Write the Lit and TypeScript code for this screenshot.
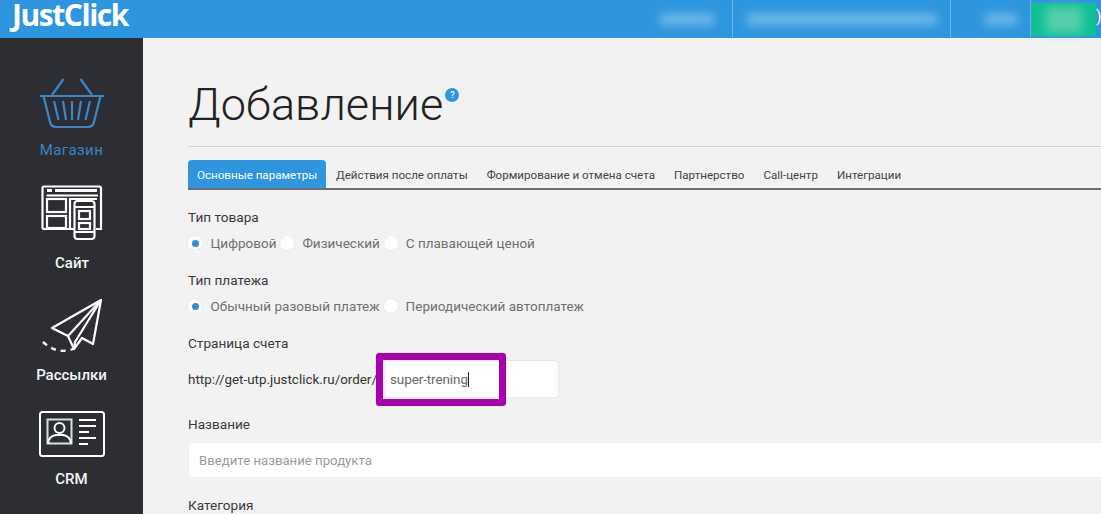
import { LitElement, html, css } from "lit";
import { customElement } from "lit/decorators.js";

const basket = html`<svg class="ic" width="66" height="52" viewBox="0 0 66 52" fill="none" stroke="#3a87c8" stroke-width="2.2">
<path d="M1 18H65" stroke-width="2"/><path d="M4.500 18 11 44Q12 49 17 49H49Q54 49 55 44L61.500 18"/>
<path d="M13 17 24.500 1M53 17 41.500 1"/><path d="M15 23 19.500 42M24 23 27 42M33 23V42M42 23 39 42M51 23 46.500 42"/></svg>`;
const site = html`<svg class="ic" width="62" height="56" viewBox="0 0 62 56" fill="none" stroke="#fff" stroke-width="2.2">
<path d="M34 44H3Q1.500 44 1.500 42V3Q1.500 1.500 3 1.500H58Q60 1.500 60 3V44H55"/><path d="M6 5.500H11M14 5.500H56" stroke-width="3"/>
<path d="M5.500 10.500H57"/><rect x="6" y="14" width="19" height="13"/><rect x="6" y="31" width="19" height="12"/><path d="M29 44V14H56"/>
<rect x="33.500" y="16" width="20" height="38" rx="3" fill="#2d2e33"/><path d="M34 22H53M34 47H53"/><rect x="38" y="26" width="11" height="8"/><rect x="38" y="38" width="11" height="6"/></svg>`;
const plane = html`<svg class="ic" width="62" height="58" viewBox="0 0 62 58" fill="none" stroke="#fff" stroke-width="2.2" stroke-linejoin="round">
<path d="M60 1 11 29 27 37 33 50 41 39 52 45Z"/><path d="M60 1 27 37M60 1 34 43 33 50"/>
<path d="M2 43Q16 56 32 50" stroke-width="2.400" stroke-dasharray="5 5"/></svg>`;
const crm = html`<svg class="ic" width="66" height="46" viewBox="0 0 66 46" fill="none" stroke="#fff" stroke-width="2">
<rect x="1" y="1" width="64" height="44" rx="2.500"/><rect x="8.500" y="8.500" width="24" height="24" stroke="#d8e0dc"/>
<circle cx="20.500" cy="17" r="5"/><path d="M9 32Q10 25 17 24H24Q31 25 32 32"/><path d="M40 9H57M40 15H57M40 21H50M40 27H57M40 33H49" stroke-width="1.800"/></svg>`;

@customElement("app-root")
export class AppRoot extends LitElement {
  static styles = css`
    :host { display: grid; grid-template-columns: 143px 1fr; grid-template-rows: 38px 1fr; height: 100vh; overflow: hidden;
      background: #f2f2f2; font-family: Roboto, "Noto Sans", sans-serif; color: #333; }
    .top { grid-column: 1 / 3; background: #2e96de; display: flex; align-items: stretch; }
    .logo { font: 700 30px/30px "Open Sans", sans-serif; color: #fff; letter-spacing: -1.450px; padding-left: 12px; width: 210px; }
    .top-r { margin-left: auto; display: flex; }
    .cell { border-right: 1px solid #6fb6e8; display: flex; align-items: center; justify-content: center; }
    .c1 { width: 91px; } .c2 { width: 217px; } .c3 { width: 79px; }
    .blob { height: 11px; background: #74b8e9; filter: blur(5px); }
    .green { width: 65px; background: #10c095; display: flex; align-items: center; justify-content: center; margin: 3px 0 2px; }
    .green .blob { background: #55cfac; width: 36px; height: 26px; }
    .paren { width: 5px; color: #fff; font-size: 16px; line-height: 34px; overflow: hidden; }
    .side { background: #2d2e33; display: flex; flex-direction: column; align-items: center; padding-top: 40px; }
    .item { display: flex; flex-direction: column; align-items: center; color: #f4f4f4; font-size: 15px; font-weight: 500; line-height: 18px; }
    .ic { display: block; }
    .shop { color: #3a83c4; font-weight: 400; letter-spacing: .4px; margin-bottom: 26px; gap: 11px; }
    .shop .ic { margin-left: 1px; }
    .site { gap: 13px; margin-bottom: 27px; margin-left: 1px; }
    .mail { gap: 9px; margin-bottom: 27px; }
    .crm { gap: 13px; }
    .main { padding: 34px 0 0 45px; min-width: 0; overflow: hidden; }
    h1 { margin: 0; font-size: 45px; font-weight: 300; line-height: 66px; color: #222; display: flex; letter-spacing: .1px; height: 74px; border-bottom: 1px solid #d4d4d4; }
    .q { width: 14px; height: 14px; border-radius: 50%; background: #2e96de; color: #fff; font: 500 9px/14px Roboto, sans-serif; text-align: center; margin: 16px 0 0 2px; letter-spacing: 0; }
    .tabs { display: flex; margin-top: 13px; border-bottom: 2px solid #6e6e6e; font-size: 11.600px; height: 28px; }
    .tab { padding: 0 9.500px; line-height: 31px; white-space: nowrap; color: #444; }
    .tab.on { background: #2e96de; color: #fff; border-radius: 4px 4px 0 0; padding: 0 8px 0 9px; width: 121px; margin-right: .5px; }
    .lab { font-size: 13.600px; line-height: 18px; color: #3a3a3a; }
    .g1 { margin-top: 18px; }
    .radios { display: flex; margin-top: 8px; font-size: 13.500px; color: #6f6f6f; line-height: 18px; height: 18px; align-items: center; }
    .g2 { margin-top: 19px; }
    .r { width: 14px; height: 14px; border-radius: 50%; background: #fff; box-shadow: 0 0 2px #ddd; display: flex; align-items: center; justify-content: center; flex: none; margin-right: 8px; }
    .r i { width: 7px; height: 7px; border-radius: 50%; background: #2e8ed8; }
    .first { margin-right: 8.500px; }
    .opt { white-space: nowrap; margin-right: 4px; }
    .g3 { margin-top: 19px; }
    .url { display: flex; align-items: center; margin-top: 8px; font-size: 13.400px; color: #333; height: 38px; white-space: nowrap; }
    .field { position: relative; width: 175px; height: 38px; box-sizing: border-box; margin-left: 7px; border-radius: 4px; background: #fff; border: 1px solid #e2e9f2; padding-left: 5px; line-height: 36px; color: #666; font-size: 13.500px; letter-spacing: -.1px; }
    .caret { display: inline-block; width: 1px; height: 15px; background: #222; vertical-align: -3px; }
    .mark { position: absolute; left: -9px; top: -8px; width: 130px; height: 53px; box-sizing: border-box; border: 7px solid #a800ad; border-radius: 3px; }
    .g4 { margin-top: 17px; }
    .inp { margin-top: 9px; height: 36px; border-radius: 4px 0 0 4px; background: #fff; border: 1px solid #e9e9e9; border-right: 0; box-sizing: border-box; padding-left: 10px; line-height: 35px; font-size: 13.200px; color: #9a9a9a; }
    .g5 { margin-top: 18px; }
  `;
  render() {
    return html`
      <header class="top">
        <div class="logo">JustClick</div>
        <div class="top-r">
          <div class="cell c1"><div class="blob" style="width:54px"></div></div>
          <div class="cell c2"><div class="blob" style="width:190px"></div></div>
          <div class="cell c3"><div class="blob" style="width:32px;margin-left:20px"></div></div>
          <div class="green"><div class="blob"></div></div>
          <div class="paren">)</div>
        </div>
      </header>
      <nav class="side">
        <div class="item shop">${basket}<span>Магазин</span></div>
        <div class="item site">${site}<span>Сайт</span></div>
        <div class="item mail">${plane}<span>Рассылки</span></div>
        <div class="item crm">${crm}<span>CRM</span></div>
      </nav>
      <main class="main">
        <h1>Добавление<span class="q">?</span></h1>
        <div class="tabs">
          <div class="tab on">Основные параметры</div>
          <div class="tab">Действия после оплаты</div>
          <div class="tab">Формирование и отмена счета</div>
          <div class="tab">Партнерство</div>
          <div class="tab">Call-центр</div>
          <div class="tab">Интеграции</div>
        </div>
        <div class="lab g1">Тип товара</div>
        <div class="radios">
          <span class="r first"><i></i></span><span class="opt">Цифровой</span>
          <span class="r"></span><span class="opt">Физический</span>
          <span class="r"></span><span class="opt">С плавающей ценой</span>
        </div>
        <div class="lab g2">Тип платежа</div>
        <div class="radios">
          <span class="r first"><i></i></span><span class="opt">Обычный разовый платеж</span>
          <span class="r"></span><span class="opt">Периодический автоплатеж</span>
        </div>
        <div class="lab g3">Страница счета</div>
        <div class="url">http://get-utp.justclick.ru/order/
          <div class="field">super-trening<span class="caret"></span><div class="mark"></div></div>
        </div>
        <div class="lab g4">Название</div>
        <div class="inp">Введите название продукта</div>
        <div class="lab g5">Категория</div>
      </main>
    `;
  }
}
